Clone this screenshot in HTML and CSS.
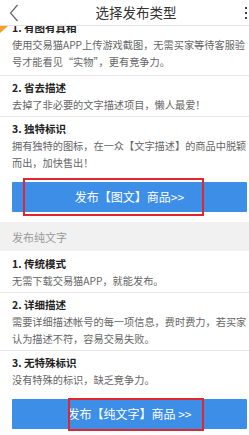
FILE: index.html
```html
<!DOCTYPE html>
<html lang="zh-CN">
<head>
  <meta charset="UTF-8">
  <meta name="viewport" content="width=device-width, initial-scale=1.0">
  <title>选择发布类型</title>
  <link rel="stylesheet" href="styles.css">
</head>
<body>
  <header class="topbar">
    <span class="back">
      <svg width="10" height="18" viewBox="0 0 10 18"><path d="M8.5 1 L1.5 9 L8.5 17" fill="none" stroke="#666" stroke-width="1.2"/></svg>
    </span>
    <h1>选择发布类型</h1>
    <span class="more"><i></i><i></i><i></i></span>
  </header>

  <main class="scroll">
    <div class="scroll-inner">
      <section class="group">
        <span class="ribbon"></span>
        <ul class="features">
          <li>
            <h3>1. 有图有真相</h3>
            <p>使用交易猫APP上传游戏截图，无需买家等待客服验号才能看见“实物”，更有竞争力。</p>
          </li>
          <li>
            <h3>2. 省去描述</h3>
            <p>去掉了非必要的文字描述项目，懒人最爱！</p>
          </li>
          <li>
            <h3>3. 独特标识</h3>
            <p>拥有独特的图标，在一众【文字描述】的商品中脱颖而出，加快售出！</p>
          </li>
        </ul>
        <div class="action">
          <a class="publish">发布【图文】商品&gt;&gt;</a>
          <span class="mark mark-pic"></span>
        </div>
      </section>

      <div class="group-title">发布纯文字</div>

      <section class="group">
        <ul class="features">
          <li>
            <h3>1. 传统模式</h3>
            <p>无需下载交易猫APP，就能发布。</p>
          </li>
          <li>
            <h3>2. 详细描述</h3>
            <p>需要详细描述帐号的每一项信息，费时费力，若买家认为描述不符，容易交易失败。</p>
          </li>
          <li>
            <h3>3. 无特殊标识</h3>
            <p>没有特殊的标识，缺乏竞争力。</p>
          </li>
        </ul>
        <div class="action">
          <a class="publish">发布【纯文字】商品 &gt;&gt;</a>
          <span class="mark mark-text"></span>
        </div>
      </section>
    </div>
  </main>
</body>
</html>
```

FILE: styles.css
```css
:root {
  --blue: #3c8ee7;
  --mark: #e3262e;
  --line: #e8e8e8;
}

html, body {
  margin: 0;
  padding: 0;
  height: 100%;
}

body {
  font-family: "Noto Sans CJK SC", "Noto Sans", sans-serif;
  background: #fff;
  color: #333;
  display: flex;
  flex-direction: column;
  overflow: hidden;
}

/* 顶部栏 */
.topbar {
  height: 25px;
  border-bottom: 1px solid #e4e4e4;
  display: flex;
  align-items: center;
  justify-content: space-between;
  padding: 0 2px 0 9px;
  flex-shrink: 0;
  position: relative;
  z-index: 2;
  background: #fff;
}

.topbar h1 {
  margin: 0;
  font-size: 13.5px;
  font-weight: normal;
  color: #333;
  line-height: 25px;
  padding-left: 8px;
}

.back {
  display: flex;
  width: 12px;
}

.more {
  display: flex;
  flex-direction: column;
  gap: 3px;
  width: 4px;
  align-items: flex-end;
}

.more i {
  width: 2px;
  height: 2px;
  background: #444;
}

/* 滚动区域 */
.scroll {
  flex: 1;
  overflow: hidden;
}

.scroll-inner {
  margin-top: -11px;
}

.group {
  position: relative;
}

.ribbon {
  position: absolute;
  left: 0;
  top: 11px;
  width: 0;
  height: 0;
  border-left: 8px solid #f4a12c;
  border-bottom: 7px solid transparent;
  z-index: 1;
}

.features {
  list-style: none;
  margin: 0;
  padding: 0;
}

.features li {
  border-top: 1px solid var(--line);
  padding: 4px 0 3px 12px;
}

.features li:first-child {
  padding-bottom: 5px;
}

.group-title + .group .features li:first-child {
  border-top-color: #fff;
  padding-bottom: 3px;
}

.features h3 {
  margin: 0;
  font-size: 10.5px;
  line-height: 16px;
  font-weight: bold;
  color: #222;
}

.features p {
  margin: 0;
  font-size: 10.2px;
  line-height: 17px;
  color: #666;
}

/* 发布按钮 */
.action {
  position: relative;
  margin: 8px 2px 10px 12px;
}

.publish {
  display: block;
  height: 30px;
  line-height: 30px;
  background: var(--blue);
  color: #fff;
  text-align: center;
  font-size: 12px;
  border-radius: 1px;
}

.mark {
  position: absolute;
  border: 2px solid var(--mark);
  box-sizing: border-box;
}

.mark-pic {
  left: 11px;
  top: -4px;
  width: 181px;
  height: 38px;
}

.mark-text {
  left: 56px;
  top: -1px;
  width: 136px;
  height: 33px;
}

.group-title {
  background: #f1f1f1;
  height: 29px;
  line-height: 31px;
  padding-left: 12px;
  font-size: 11px;
  color: #999;
}
```
